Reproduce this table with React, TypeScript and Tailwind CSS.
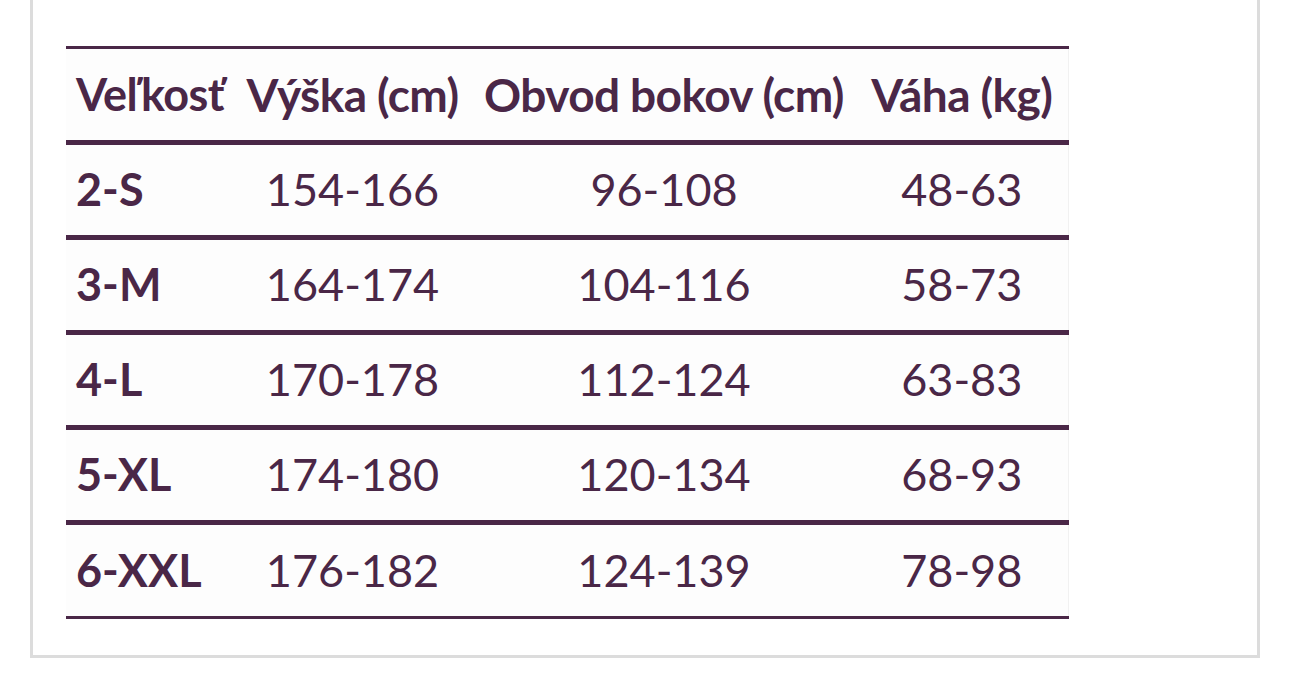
const rows = [
  ["2-S", "154-166", "96-108", "48-63"],
  ["3-M", "164-174", "104-116", "58-73"],
  ["4-L", "170-178", "112-124", "63-83"],
  ["5-XL", "174-180", "120-134", "68-93"],
  ["6-XXL", "176-182", "124-139", "78-98"],
];

export default function App() {
  return (
    <div className="w-[1290px] h-[690px] bg-white overflow-hidden font-['Lato',sans-serif] text-[#4a2747]">
      <div className="ml-[30px] w-[1230px] h-[658px] border-x-[3px] border-b-[3px] border-[#dcdcdc] pt-[46px] pl-[33px]">
        <table className="table-fixed w-[1002px] border-collapse bg-[#fdfdfd] border-r border-[#f1f1f1]">
          <thead>
            <tr className="border-t-[3px] border-b-[5px] border-[#4a2747]">
              <th className="w-[167px] h-[95px] pl-[10px] text-left text-[45px] font-bold tracking-[-0.6px] whitespace-nowrap">Veľkosť</th>
              <th className="w-[239px] text-center text-[46px] font-bold tracking-[-0.6px] whitespace-nowrap">Výška (cm)</th>
              <th className="w-[384px] text-center text-[46px] font-bold tracking-[-0.6px] whitespace-nowrap">Obvod bokov (cm)</th>
              <th className="w-[212px] text-center text-[46px] font-bold tracking-[-0.6px] whitespace-nowrap">Váha (kg)</th>
            </tr>
          </thead>
          <tbody>
            {rows.map((r, i) => (
              <tr
                key={r[0]}
                className={i === rows.length - 1 ? "border-b-[3px] border-[#4a2747]" : "border-b-[5px] border-[#4a2747]"}
              >
                <td className="h-[95px] pl-[10px] text-left text-[45px] font-bold">{r[0]}</td>
                <td className="text-center text-[45px]">{r[1]}</td>
                <td className="text-center text-[45px]">{r[2]}</td>
                <td className="text-center text-[45px]">{r[3]}</td>
              </tr>
            ))}
          </tbody>
        </table>
      </div>
    </div>
  );
}
